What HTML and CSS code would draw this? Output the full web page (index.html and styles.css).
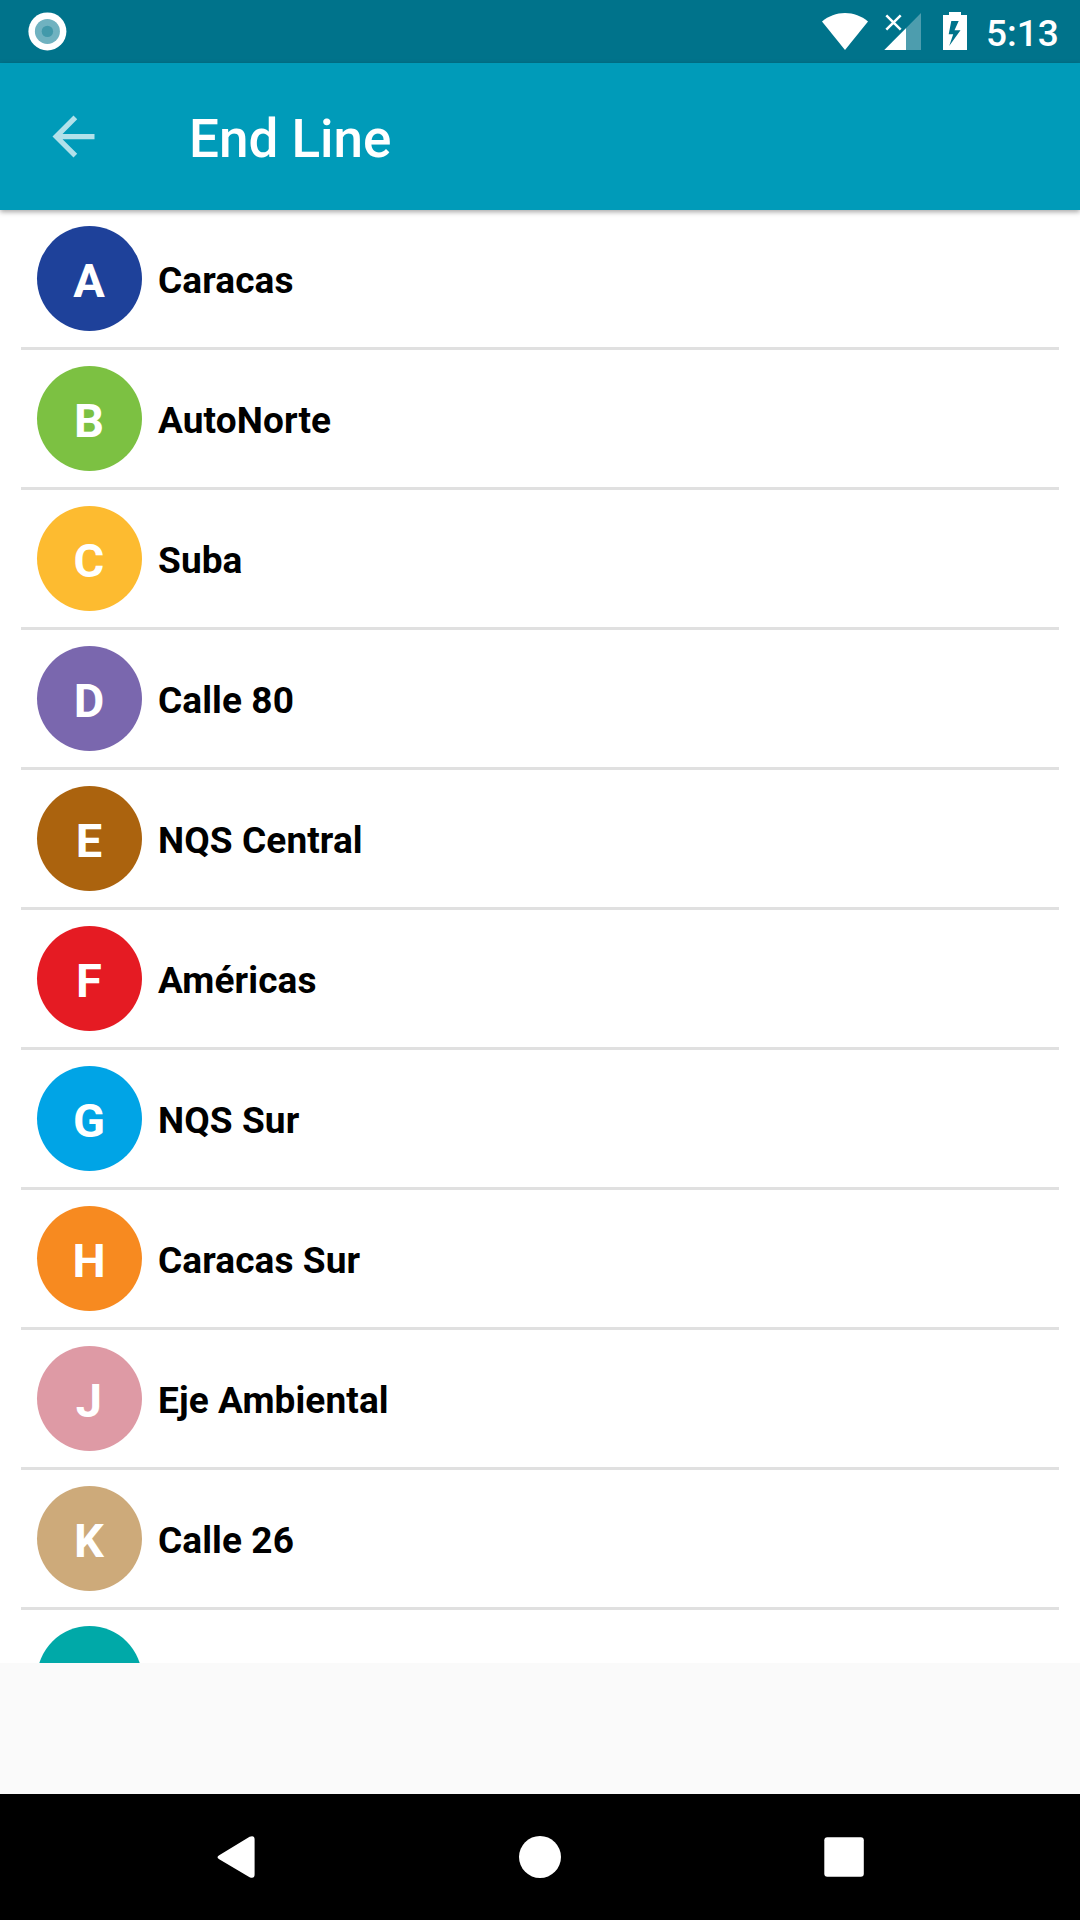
FILE: index.html
```html
<!DOCTYPE html>
<html lang="en">
<head>
<meta charset="utf-8">
<title>End Line</title>
<link rel="stylesheet" href="styles.css">
</head>
<body>
<div class="screen">
  <div class="status-bar">
    <svg class="status-notification" viewBox="0 0 63 63">
      <circle cx="31.4" cy="31.4" r="19" fill="#fff"/>
      <circle cx="31.4" cy="31.4" r="12.5" fill="#70b2c0"/>
      <circle cx="31.4" cy="31.4" r="5.7" fill="#4299aa"/>
    </svg>
    <svg class="status-icons" viewBox="0 0 160 63">
      <path fill="#fff" d="M2 21.5C8.500 16 16.500 13 25 13s16.500 3 23 8.500L25 50z"/>
      <path fill="#fff" fill-opacity=".3" d="M101 13v37H64.500z"/>
      <path fill="#fff" d="M86 28.200V50H64.300z"/>
      <path stroke="#fff" stroke-width="2.500" d="M66.300 15.300l14.400 14.400M80.700 15.300L66.300 29.700"/>
      <path fill="#fff" fill-rule="evenodd" d="M129 12h12v3h6v35h-24V15h6zM131.300 21L128.700 34.200h4.500L129.200 46L140.500 30.300H134.500L138.700 21z"/>
    </svg>
    <span class="clock">5:13</span>
  </div>
  <header class="app-bar">
    <svg class="back" viewBox="0 0 24 24"><path d="M20 11H7.830l5.590-5.590L12 4l-8 8 8 8 1.410-1.410L7.830 13H20z"/></svg>
    <h1 class="title">End Line</h1>
  </header>
  <ul class="list">
    <li class="row"><span class="badge blue">A</span><span class="name">Caracas</span></li>
    <li class="row"><span class="badge green">B</span><span class="name">AutoNorte</span></li>
    <li class="row"><span class="badge yellow">C</span><span class="name">Suba</span></li>
    <li class="row"><span class="badge purple">D</span><span class="name">Calle 80</span></li>
    <li class="row"><span class="badge brown">E</span><span class="name">NQS Central</span></li>
    <li class="row"><span class="badge red">F</span><span class="name">Américas</span></li>
    <li class="row"><span class="badge sky">G</span><span class="name">NQS Sur</span></li>
    <li class="row"><span class="badge orange">H</span><span class="name">Caracas Sur</span></li>
    <li class="row"><span class="badge pink">J</span><span class="name">Eje Ambiental</span></li>
    <li class="row"><span class="badge tan">K</span><span class="name">Calle 26</span></li>
    <li class="row"><span class="badge teal"></span></li>
  </ul>
  <nav class="nav-bar">
    <svg class="nav-icon" viewBox="0 0 60 60"><path d="M13.200 28.300L43.600 9.700q5-1.800 5 2.800v35q0 4.600-5 2.800L13.200 32.200q-3.400-1.900 0-3.900z"/></svg>
    <svg class="nav-icon" viewBox="0 0 60 60"><circle cx="30" cy="30" r="21"/></svg>
    <svg class="nav-icon" viewBox="0 0 60 60"><rect x="10.300" y="10.200" width="39.500" height="39.500" rx="3"/></svg>
  </nav>
</div>
</body>
</html>
```
FILE: styles.css
```css
* {
  box-sizing: border-box;
}

body {
  margin: 0;
  font-family: Roboto, sans-serif;
}

.screen {
  display: flex;
  flex-direction: column;
  width: 1080px;
  height: 1920px;
  overflow: hidden;
  background: #fafafa;
}

.status-bar {
  display: flex;
  flex: none;
  height: 63px;
  padding: 0 21px 0 16px;
  background: #00738b;
}

.status-notification {
  width: 63px;
  height: 63px;
}

.status-icons {
  width: 160px;
  height: 63px;
  margin-left: auto;
  fill: none;
}

.clock {
  width: 79px;
  padding-left: 6px;
  color: #fff;
  font-size: 37px;
  font-weight: 500;
  line-height: 67px;
  white-space: nowrap;
}

.app-bar {
  z-index: 1;
  display: flex;
  flex: none;
  align-items: center;
  height: 147px;
  padding-left: 42px;
  background: #009bb9;
  box-shadow: 0 2px 5px rgba(0, 0, 0, 0.35);
}

.back {
  width: 63px;
  height: 63px;
  fill: #b2e1ea;
}

.title {
  margin: 0 0 0 84px;
  padding-top: 5px;
  color: #fff;
  font-size: 53px;
  font-weight: 500;
  line-height: 60px;
}

.list {
  flex: none;
  height: 1453px;
  margin: 0;
  padding: 0 21px;
  overflow: hidden;
  background: #fff;
  list-style: none;
}

.row {
  display: flex;
  align-items: flex-start;
  gap: 16px;
  height: 140px;
  padding: 16px 16px 0;
  border-bottom: 3px solid #e0e0e0;
}

.badge {
  flex: none;
  width: 105px;
  height: 105px;
  padding-right: 1px;
  border-radius: 50%;
  color: #fff;
  font-size: 47px;
  font-weight: 700;
  line-height: 109px;
  text-align: center;
}

.name {
  color: #000;
  font-size: 37px;
  font-weight: 700;
  letter-spacing: 0.1px;
  line-height: 109px;
}

.blue { background: #1e419a; }
.green { background: #7cc142; }
.yellow { background: #fdbb30; }
.purple { background: #7a67ae; }
.brown { background: #ab630e; }
.red { background: #e51b23; }
.sky { background: #00a4e6; }
.orange { background: #f78a20; }
.pink { background: #de9aa5; }
.tan { background: #cdaa7a; }
.teal { background: #00a9a8; }

.nav-bar {
  display: flex;
  flex: none;
  align-items: center;
  justify-content: center;
  gap: 244px;
  height: 126px;
  margin-top: auto;
  background: #000;
}

.nav-icon {
  width: 60px;
  height: 60px;
  fill: #fff;
}
```
